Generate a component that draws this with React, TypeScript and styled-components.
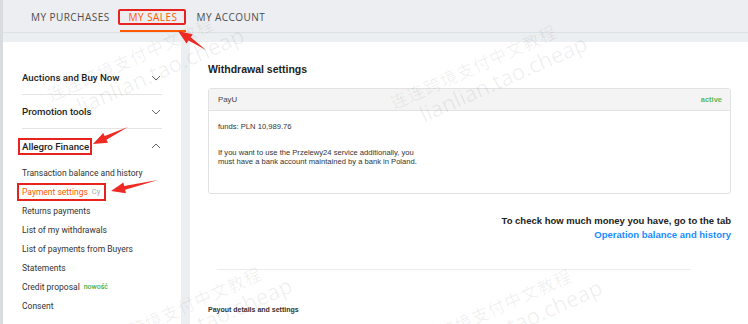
import React from "react";
import styled, { createGlobalStyle, css } from "styled-components";

const Global = createGlobalStyle`
  html, body { margin: 0; padding: 0; }
  body { width: 748px; height: 324px; overflow: hidden; background: #eceff1; }
  * { box-sizing: border-box; }
`;

const Page = styled.div`
  position: relative;
  width: 748px;
  height: 324px;
  overflow: hidden;
  background: #eceff1;
  border-left: 3px solid #d9dcdf;
  display: flex;
  flex-direction: column;
`;

const NavBar = styled.nav`
  height: 33px;
  flex: none;
  display: flex;
  align-items: stretch;
  padding-left: 19px;
  border-bottom: 1px solid #dde1e4;
  background: #eceef1;
`;

const Tab = styled.div<{ $active?: boolean; $marked?: boolean }>`
  position: relative;
  display: flex;
  align-items: center;
  padding: 3px 9px 0 9px;
  margin-right: 1px;
  font-family: "Open Sans", sans-serif;
  font-size: 10px;
  letter-spacing: 0.45px;
  color: ${(p) => (p.$active ? "#ff5a00" : "#4d4d4d")};
  border-bottom: 2px solid ${(p) => (p.$active ? "#ff5a00" : "transparent")};
  ${(p) =>
    p.$marked &&
    css`
      &::after {
        content: "";
        position: absolute;
        left: -2px;
        right: 0;
        top: 9px;
        bottom: 5px;
        border: 2px solid #e8231f;
        border-radius: 2px;
      }
    `}
`;

const Body = styled.div`
  flex: 1;
  display: flex;
  gap: 9px;
  padding-top: 9px;
  min-height: 0;
`;

const Sidebar = styled.aside`
  width: 178px;
  flex: none;
  background: #fff;
  padding: 19px 19px 0 19px;
  font-family: Roboto, "Open Sans", sans-serif;
`;

const Section = styled.div<{ $last?: boolean }>`
  height: 34px;
  display: flex;
  align-items: center;
  justify-content: space-between;
  border-bottom: ${(p) => (p.$last ? "none" : "1px solid #e4e4e4")};
`;

const SectionTitle = styled.span<{ $marked?: boolean }>`
  position: relative;
  font-size: 9.7px;
  font-weight: 500;
  color: #1e1e1e;
  ${(p) =>
    p.$marked &&
    css`
      &::after {
        content: "";
        position: absolute;
        left: -4px;
        right: -3px;
        top: -3px;
        bottom: -3px;
        border: 2px solid #e8231f;
      }
    `}
`;

const Chevron = styled.svg`
  width: 10px;
  height: 6px;
  margin-right: 1px;
  flex: none;
`;

const SubList = styled.ul`
  list-style: none;
  margin: 0;
  padding: 0;
`;

const SubItem = styled.li`
  height: 19px;
  display: flex;
  align-items: center;
`;

const SubLabel = styled.span<{ $active?: boolean; $marked?: boolean }>`
  position: relative;
  display: inline-flex;
  align-items: center;
  gap: 4px;
  font-size: 8.5px;
  color: ${(p) => (p.$active ? "#ff5a00" : "#333")};
  ${(p) =>
    p.$marked &&
    css`
      &::after {
        content: "";
        position: absolute;
        left: -5px;
        right: -6px;
        top: -4px;
        bottom: -4px;
        border: 2px solid #e8231f;
      }
    `}
`;

const Hint = styled.span`
  font-size: 7.5px;
  color: #aaa;
`;

const NewTag = styled.span`
  font-size: 7px;
  font-weight: 500;
  color: #3fae49;
  margin-left: 4px;
`;

const Main = styled.main`
  flex: 1;
  background: #fff;
  padding: 19px 17px 0 18px;
  font-family: "Liberation Sans", Arial, sans-serif;
  display: flex;
  flex-direction: column;
`;

const Title = styled.h2`
  margin: 0;
  font-size: 10.5px;
  font-weight: 700;
  color: #222;
  line-height: 17px;
`;

const Card = styled.section`
  margin-top: 10px;
  border: 1px solid #e2e2e2;
  border-radius: 3px;
  height: 106px;
  display: flex;
  flex-direction: column;
`;

const CardHeader = styled.div`
  height: 22px;
  background: #f4f4f4;
  border-bottom: 1px solid #e2e2e2;
  display: flex;
  align-items: center;
  justify-content: space-between;
  padding: 0 8px 0 9px;
  font-size: 7.8px;
  color: #444;
`;

const Status = styled.span`
  color: #5cb85c;
  font-weight: 700;
  font-size: 7.5px;
`;

const CardBody = styled.div`
  padding: 11px 9px;
  font-size: 7.6px;
  color: #333;
  line-height: 9.5px;
`;

const Para = styled.p<{ $gap?: number }>`
  margin: 0;
  margin-top: ${(p) => p.$gap ?? 0}px;
`;

const BalanceNote = styled.div`
  margin-top: 20px;
  text-align: right;
  font-size: 9.5px;
  font-weight: 700;
  color: #222;
  line-height: 14px;
`;

const TabLink = styled.a`
  display: block;
  color: #1a8cff;
  text-decoration: none;
`;

const Divider = styled.hr`
  margin: 27px 40px 0 9px;
  border: none;
  border-top: 1px solid #ececec;
`;

const SubTitle = styled.h3`
  margin: 36px 0 0 0;
  font-size: 7px;
  font-weight: 700;
  color: #333;
`;

const Overlay = styled.svg`
  position: absolute;
  left: -3px;
  top: 0;
  width: 748px;
  height: 324px;
  pointer-events: none;
`;

const Watermark = styled.div<{ $x: number; $y: number }>`
  position: absolute;
  left: ${(p) => p.$x}px;
  top: ${(p) => p.$y}px;
  transform: rotate(-24deg);
  transform-origin: left top;
  color: rgba(0, 0, 0, 0.065);
  font-family: "Open Sans", "Noto Sans CJK SC", sans-serif;
  pointer-events: none;
  white-space: nowrap;
  line-height: 1;
`;

const WmCn = styled.div`
  font-size: 17px;
  letter-spacing: 1px;
`;

const WmEn = styled.div`
  font-size: 22px;
  margin-left: 22px;
  margin-top: 2px;
`;

function arrowPoints(x1: number, y1: number, x2: number, y2: number) {
  const dx = x2 - x1;
  const dy = y2 - y1;
  const len = Math.hypot(dx, dy);
  const ux = dx / len;
  const uy = dy / len;
  const nx = -uy;
  const ny = ux;
  const head = 14;
  const bx = x2 - ux * head;
  const by = y2 - uy * head;
  const pts = [
    [x1, y1],
    [bx + nx * 2, by + ny * 2],
    [bx + nx * 5.5, by + ny * 5.5],
    [x2, y2],
    [bx - nx * 5.5, by - ny * 5.5],
    [bx - nx * 2, by - ny * 2],
  ];
  return pts.map((p) => p.map((v) => v.toFixed(1)).join(",")).join(" ");
}

const Down = () => (
  <Chevron viewBox="0 0 10 6">
    <path d="M1 1l4 4 4-4" fill="none" stroke="#666" strokeWidth="1" />
  </Chevron>
);
const Up = () => (
  <Chevron viewBox="0 0 10 6">
    <path d="M1 5l4-4 4 4" fill="none" stroke="#666" strokeWidth="1" />
  </Chevron>
);

const subItems = [
  "Transaction balance and history",
  "Payment settings",
  "Returns payments",
  "List of my withdrawals",
  "List of payments from Buyers",
  "Statements",
  "Credit proposal",
  "Consent",
];

const WmBlock = ({ x, y }: { x: number; y: number }) => (
  <Watermark $x={x} $y={y}>
    <WmCn>连连跨境支付中文教程</WmCn>
    <WmEn>lianlian.tao.cheap</WmEn>
  </Watermark>
);

export default function App() {
  return (
    <>
      <Global />
      <Page>
        <NavBar>
          <Tab>MY PURCHASES</Tab>
          <Tab $active $marked>MY SALES</Tab>
          <Tab>MY ACCOUNT</Tab>
        </NavBar>
        <Body>
          <Sidebar>
            <Section>
              <SectionTitle>Auctions and Buy Now</SectionTitle>
              <Down />
            </Section>
            <Section>
              <SectionTitle>Promotion tools</SectionTitle>
              <Down />
            </Section>
            <Section $last>
              <SectionTitle $marked>Allegro Finance</SectionTitle>
              <Up />
            </Section>
            <SubList>
              {subItems.map((s) => {
                const active = s === "Payment settings";
                return (
                  <SubItem key={s}>
                    <SubLabel $active={active} $marked={active}>
                      {s}
                      {active && <Hint>Cy</Hint>}
                    </SubLabel>
                    {s === "Credit proposal" && <NewTag>nowość</NewTag>}
                  </SubItem>
                );
              })}
            </SubList>
          </Sidebar>
          <Main>
            <Title>Withdrawal settings</Title>
            <Card>
              <CardHeader>
                <span>PayU</span>
                <Status>active</Status>
              </CardHeader>
              <CardBody>
                <Para>funds: PLN 10,989.76</Para>
                <Para $gap={16}>
                  If you want to use the Przelewy24 service additionally, you
                  <br />
                  must have a bank account maintained by a bank in Poland.
                </Para>
              </CardBody>
            </Card>
            <BalanceNote>
              To check how much money you have, go to the tab
              <TabLink href="#">Operation balance and history</TabLink>
            </BalanceNote>
            <Divider />
            <SubTitle>Payout details and settings</SubTitle>
          </Main>
        </Body>
        <WmBlock x={42} y={88} />
        <WmBlock x={385} y={96} />
        <WmBlock x={90} y={338} />
        <WmBlock x={400} y={340} />
        <Overlay viewBox="0 0 748 324">
          <polygon points={arrowPoints(206, 50, 178, 31)} fill="#ee2a24" />
          <polygon points={arrowPoints(128, 127, 93, 144)} fill="#ee2a24" />
          <polygon points={arrowPoints(158, 180, 111, 191)} fill="#ee2a24" />
        </Overlay>
      </Page>
    </>
  );
}
